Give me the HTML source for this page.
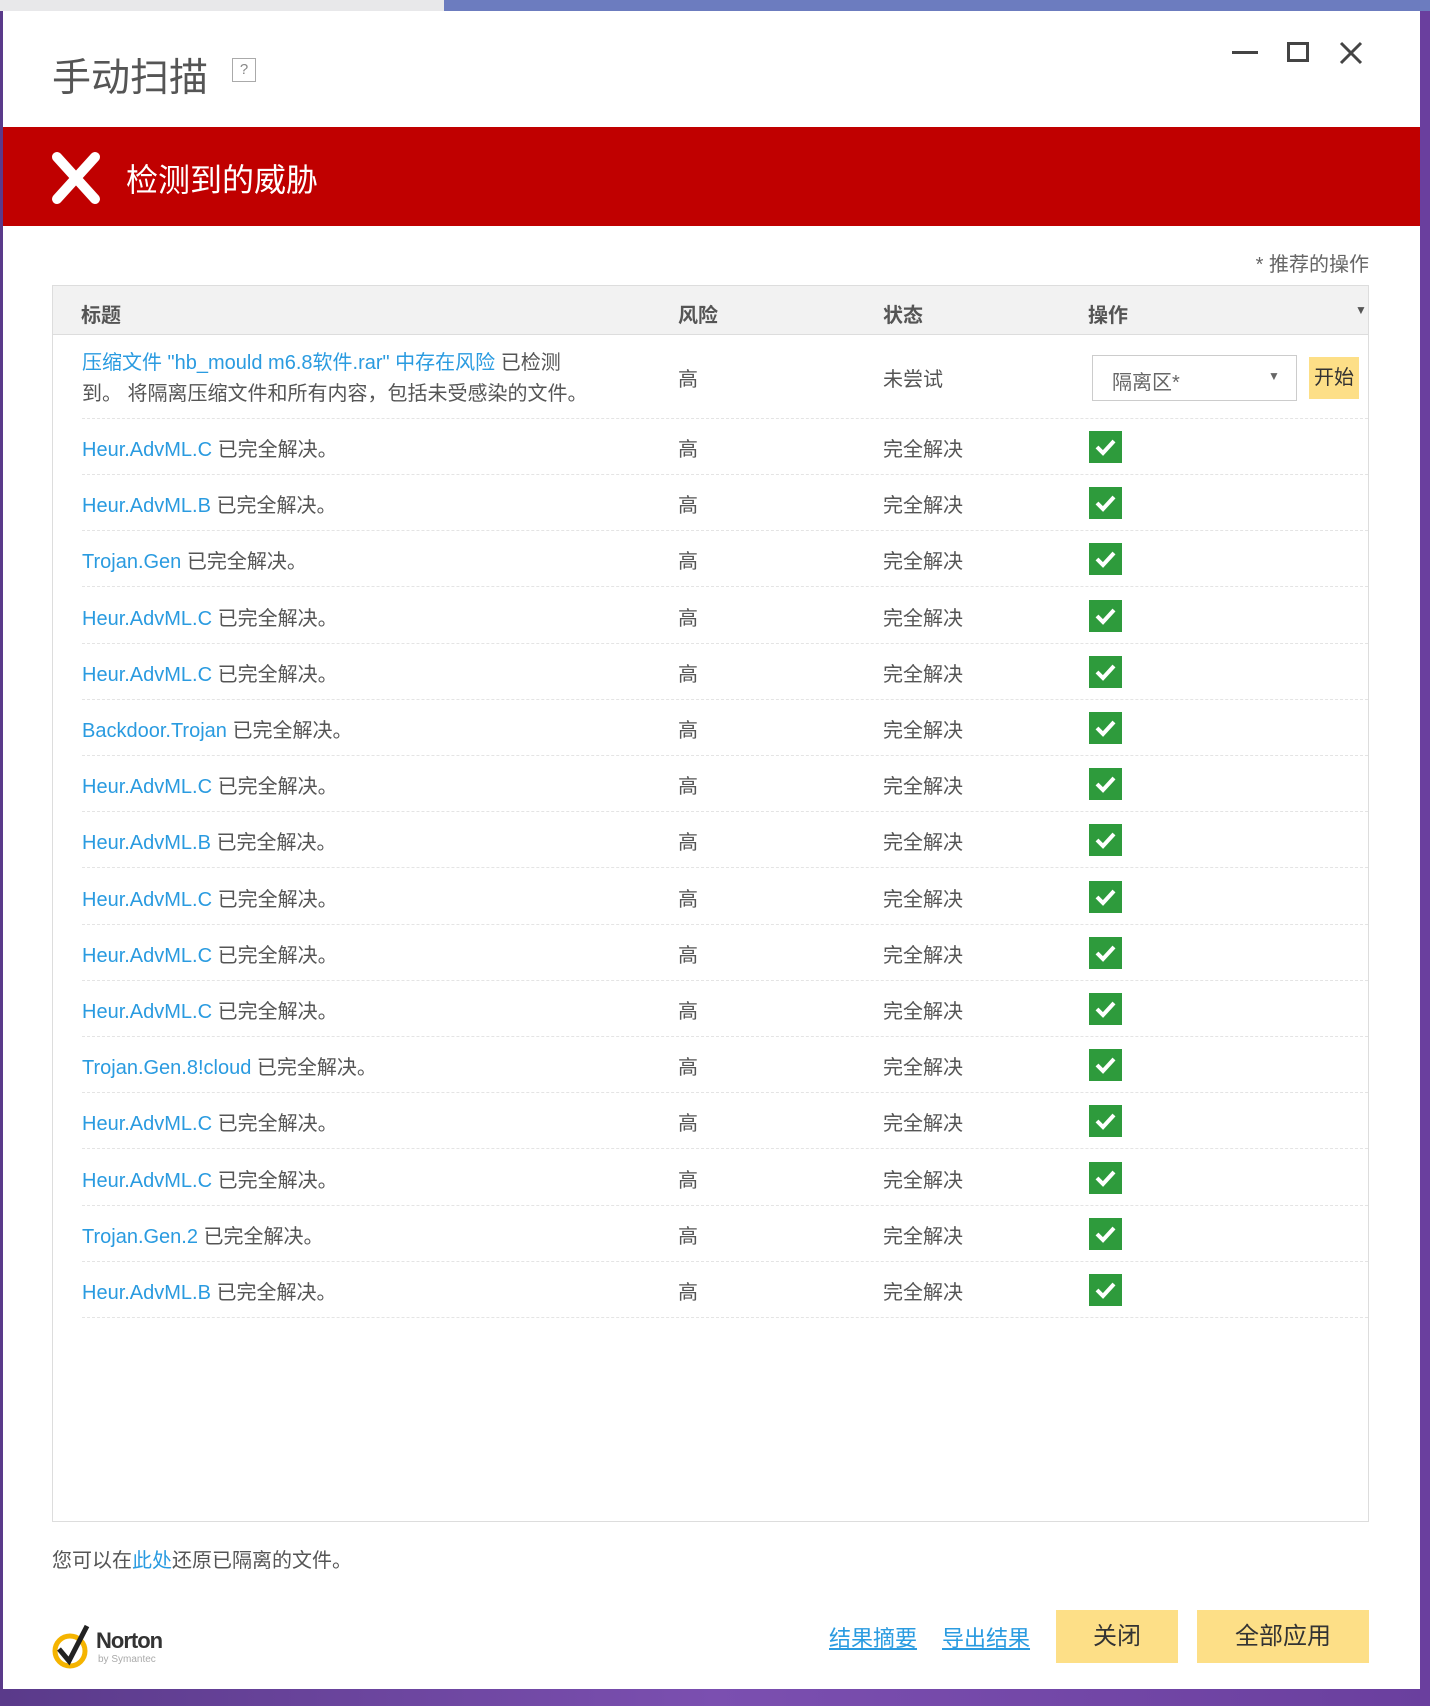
<!DOCTYPE html>
<html><head><meta charset="utf-8"><style>
*{margin:0;padding:0;box-sizing:border-box}
body{width:1430px;height:1706px;overflow:hidden;position:relative;background:linear-gradient(90deg,#5a3a8a,#7b4fb0,#6a3f9e);font-family:"Liberation Sans","Noto Sans CJK SC",sans-serif;color:#555}
.topl{position:absolute;left:0;top:0;width:444px;height:11px;background:#e8e8ea}
.topr{position:absolute;left:444px;top:0;width:986px;height:11px;background:#6c7cbf}
.win{position:absolute;left:3px;top:11px;width:1417px;height:1678px;background:#fff}
.a{position:absolute;white-space:nowrap}
.title{left:49px;top:36px;font-size:39px;color:#555}
.help{left:229px;top:47px;width:24px;height:24px;border:1px solid #aaa;font-size:15px;color:#888;text-align:center;line-height:22px}
.banner{left:0;top:116px;width:1417px;height:99px;background:#c00000}
.bt{left:123px;top:28px;font-size:32px;color:#fff}
.tbl{left:49px;top:274px;width:1317px;height:1237px;border:1px solid #ddd}
.hd{position:absolute;left:0;top:0;width:100%;height:49px;background:#f2f2f2;border-bottom:1px solid #ddd;font-size:20px;font-weight:bold;color:#555}
.hd span{position:absolute;top:13px}
.row{position:absolute;left:29px;width:1286px;border-bottom:1px dashed #e4e4e4;font-size:20px}
.row span{position:absolute}
.foot{font-size:20px;color:#555}
.lk{color:#2a9be0}
.btn{background:#fddf87;font-size:24px;color:#333;text-align:center}
</style></head><body>
<div class="topl"></div><div class="topr"></div>
<div class="win">
<div class="a title">手动扫描</div>
<div class="a help">?</div>
<div class="a" style="left:1229px;top:40px;width:26px;height:3px;background:#444"></div>
<div class="a" style="left:1284px;top:31px;width:22px;height:20px;border:3px solid #444"></div>
<svg class="a" style="left:1336px;top:30px" width="24" height="24"><path d="M2 2L22 22M22 2L2 22" stroke="#444" stroke-width="3"/></svg>
<div class="a banner">
<svg class="a" style="left:48px;top:25px" width="50" height="52"><path d="M6 5L44 47M44 5L6 47" stroke="#fff" stroke-width="10" stroke-linecap="round"/></svg>
<div class="a bt">检测到的威胁</div></div>
<div class="a" style="right:51px;top:237px;font-size:20px;color:#666">* 推荐的操作</div>
<div class="a tbl">
<div class="hd"><span style="left:28px">标题</span><span style="left:625px">风险</span><span style="left:830px">状态</span><span style="left:1035px">操作</span><span style="left:1302px;font-size:12px;top:17px">▼</span></div>
<div class="row" style="top:50px;height:83px"><span style="left:0;top:12px;line-height:31px"><span class="lk" style="position:static">压缩文件 "hb_mould m6.8软件.rar" 中存在风险</span> 已检测<br>到。 将隔离压缩文件和所有内容，包括未受感染的文件。</span><span style="left:596px;top:27px">高</span><span style="left:801px;top:27px">未尝试</span>
<div class="a" style="left:1010px;top:19px;width:205px;height:46px;border:1px solid #ccc;font-size:20px;color:#666;padding:10px 0 0 19px">隔离区*<span style="left:175px;top:13px;font-size:12px">▼</span></div>
<div class="a" style="left:1227px;top:21px;width:50px;height:42px;background:#fddf87;font-size:20px;color:#333;text-align:center;line-height:42px">开始</div></div>
</div>
<div class="a foot" style="left:49px;top:1533px">您可以在<span class="lk">此处</span>还原已隔离的文件。</div>
<svg class="a" style="left:48px;top:1612px" width="42" height="48"><circle cx="19" cy="28" r="15" fill="none" stroke="#f5b400" stroke-width="5"/><path d="M8 26L18 38L36 3" fill="none" stroke="#222" stroke-width="5"/></svg>
<div class="a" style="left:93px;top:1617px;font-size:22px;font-weight:bold;color:#333;letter-spacing:-1px">Norton</div>
<div class="a" style="left:95px;top:1643px;font-size:10px;color:#aaa">by Symantec</div>
<div class="a foot lk" style="left:826px;top:1610px;font-size:22px;text-decoration:underline">结果摘要</div>
<div class="a foot lk" style="left:939px;top:1610px;font-size:22px;text-decoration:underline">导出结果</div>
<div class="a btn" style="left:1053px;top:1599px;width:122px;height:53px;line-height:53px">关闭</div>
<div class="a btn" style="left:1194px;top:1599px;width:172px;height:53px;line-height:53px">全部应用</div>
</div>
<script>
var d=[["Heur.AdvML.C"],["Heur.AdvML.B"],["Trojan.Gen"],["Heur.AdvML.C"],["Heur.AdvML.C"],["Backdoor.Trojan"],["Heur.AdvML.C"],["Heur.AdvML.B"],["Heur.AdvML.C"],["Heur.AdvML.C"],["Heur.AdvML.C"],["Trojan.Gen.8!cloud"],["Heur.AdvML.C"],["Heur.AdvML.C"],["Trojan.Gen.2"],["Heur.AdvML.B"]];
var t=document.querySelector('.tbl'),h='';
d.forEach(function(r,i){var top=133+i*56.2;h+='<div class="row" style="top:'+top+'px;height:56px"><span style="left:0;top:14px"><span class="lk" style="position:static">'+r[0]+'</span> 已完全解决。</span><span style="left:596px;top:14px">高</span><span style="left:801px;top:14px">完全解决</span><div style="position:absolute;top:12px;left:1007px;width:33px;height:32px;background:#2e9b3c"><svg width="33" height="32"><path d="M8 16L14 22L25 10" fill="none" stroke="#fff" stroke-width="4"/></svg></div></div>';});
t.insertAdjacentHTML('beforeend',h);
</script>
</body></html>
